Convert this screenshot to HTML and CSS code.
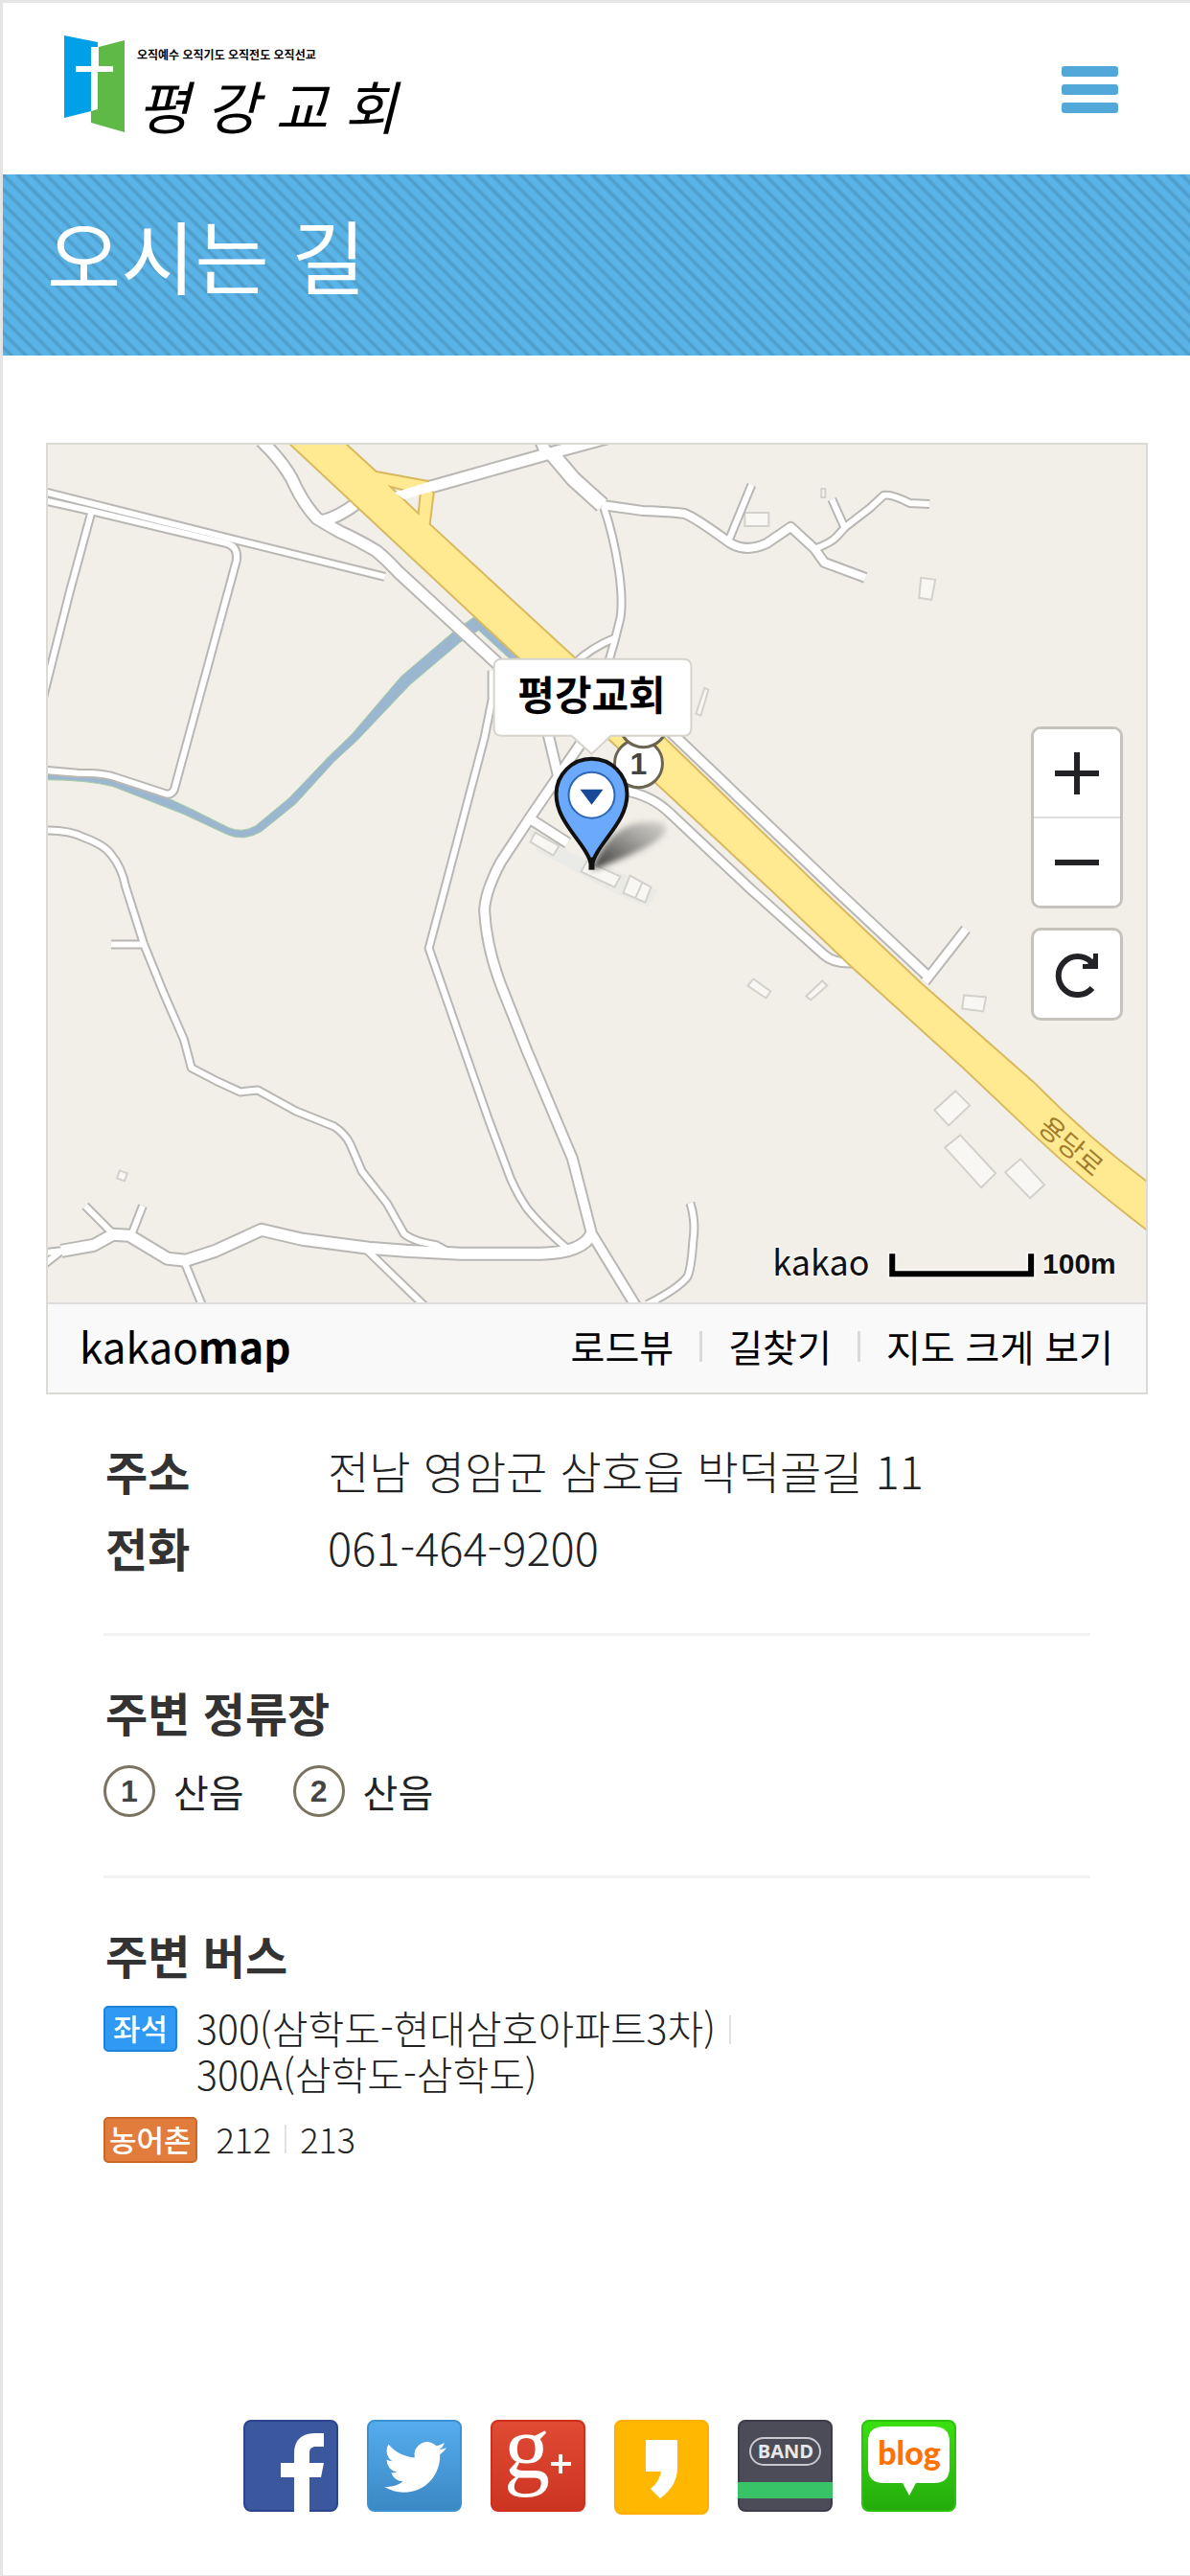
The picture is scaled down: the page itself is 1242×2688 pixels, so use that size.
FILE: index.html
```html
<!DOCTYPE html>
<html lang="ko">
<head>
    <meta charset="utf-8" />
    <meta name="viewport" content="width=device-width, initial-scale=1">
    <title>평강교회 - 오시는 길</title>
    <link rel="stylesheet" href="styles.css">
</head>
<body>
    <header class="header">
        <a class="logo" href="#">
            <svg class="logoMark" viewBox="0 0 64 101" aria-hidden="true">
                <path fill="#00a0e9" d="M0 0 35 7V12H28V32H12V38H28V79L0 86Z"/>
                <path fill="#5fb946" d="M36 12 63 5V101L28 91V79L35 77V38H51V32H36Z"/>
            </svg>
            <span class="logoText">
                <span class="slogan">오직예수 오직기도 오직전도 오직선교</span>
                <span class="churchName">평 강 교 회</span>
            </span>
        </a>
        <button class="menuButton" type="button" aria-label="메뉴">
            <span class="bar"></span>
            <span class="bar"></span>
            <span class="bar"></span>
        </button>
    </header>

    <div class="titleBar">
        <h1>오시는 길</h1>
    </div>

    <div class="mapBox">
        <div class="mapView">
            <svg class="mapSvg" viewBox="49 464 1147 896" role="img" aria-label="평강교회 지도">
                <defs>
                    <linearGradient id="shadow" x1="0" y1="1" x2="1" y2="0">
                        <stop offset="0" stop-color="#222" stop-opacity=".95"/>
                        <stop offset="1" stop-color="#777" stop-opacity=".25"/>
                    </linearGradient>
                    <filter id="soft"><feGaussianBlur stdDeviation="3"/></filter>
                    <!-- roads are drawn twice: grey casing, then white fill -->
                    <g id="roads">
                        <path class="w13" d="M417 514 449 508 570 474 640 455M564 460 570 474"/>
                        <path class="w15" d="M576 474 598 500 628 527"/>
                        <path class="w9" d="M630 530Q640 560 645 593 650 625 647 645L641 669 632 700M600 692Q615 677 641 666"/>
                        <path class="w10" d="M628 527 670 533Q700 534 714 536 725 540 762 567 779 577 800 567L825 550 850 573 860 587 903 603"/>
                        <path class="w9" d="M850 573Q868 566 873 560L882 550 908 530 922 517Q930 515 949 525L970 526M868 521 881 550M784 506 761 562"/>
                        <path class="w13" d="M272 460Q293 480 304 500 315 525 330 541 345 550 354 555 372 563 392 575 402 583 415 597L530 703M335 544Q352 540 372 525"/>
                        <path class="w9" d="M44 513 243 563 401 602"/>
                        <path class="w9" d="M44 522 97 534 235 567Q248 570 246 585L181 824Q178 831 170 828L118 811Q108 807 80 807L44 804M94 536 72 617 44 728"/>
                        <path class="w9" d="M44 867Q70 866 86 874 108 882 115 892 126 905 130 925L149 985 170 1037 191 1085 199 1115 224 1128 250 1140 268 1138 308 1160 348 1176Q360 1184 365 1195L377 1223 403 1256 421 1288Q430 1296 455 1300L466 1306M115 986H149"/>
                        <path class="w13" d="M63 1306 97 1300 117 1289 134 1290 174 1314 193 1316 224 1306 272 1284 315 1294 384 1303 423 1306 480 1309H564Q608 1308 617 1288"/>
                        <path class="w9" d="M44 1308 63 1306M44 1321 63 1306M88 1259 118 1289M148 1259 136 1290M191 1316 211 1365M381 1304 444 1365"/>
                        <path class="w9" d="M513 700V730L505 770 463 930 447 990 480 1085 509 1168 528 1219Q535 1240 549 1261 565 1281 592 1304"/>
                        <path class="w11" d="M605 777 553 853 522 900Q506 930 505 950 507 990 524 1033L549 1096 597 1210 617 1288 664 1365M570 760 582 810 588 815M553 855 592 880"/>
                        <path class="w9" d="M720 1256Q726 1275 723 1295 721 1325 717 1333 708 1345 675 1362"/>
                        <path class="w11" d="M690 755 872 929 967 1018"/>
                        <path class="w10" d="M650 825Q680 830 700 850L784 929 860 997Q870 1006 890 1005M1008 970 965 1025"/>
                    </g>
                </defs>
                <rect x="49" y="464" width="1147" height="896" fill="#f2efe8"/>
                <path fill="#eaebe7" d="M549 863 600 892 625 900 686 930 676 947 640 932 560 888Z"/>

                <path class="river" d="M44 808 80 807 118 812 170 831 200 845 238 864Q252 870 266 862L301 833 343 789 366 767 418 706 472 660 497 642 556 698 548 703 499 658 479 671 427 715 372 773 348 795 308 839 272 868Q253 879 236 871L191 850 117 821Q90 814 44 814Z"/>

                <g class="building">
                    <path d="M777 535H802V549H777ZM961 603 976 605 972 626 959 624ZM735 718 739 720 731 747 726 745ZM857 510H861V519H857Z"/>
                    <path d="M558 869 583 883 577 893 553 879ZM612 899 647 915 641 926 606 910ZM657 914 679 926 673 942 650 932ZM670 921 663 937"/>
                    <path d="M786 1022 804 1035 799 1042 780 1029ZM858 1024 863 1029 846 1044 841 1040ZM1006 1039 1029 1041 1026 1056 1004 1053Z"/>
                    <path d="M997 1139 1012 1154 990 1175 975 1159ZM1002 1185 1039 1225 1024 1240 986 1198ZM1065 1210 1090 1237 1075 1251 1049 1224ZM124 1222 132 1225 129 1233 121 1230Z"/>
                </g>

                <use class="casing" href="#roads"/>
                <use class="fill" href="#roads"/>

                <path class="mainRoad" d="M298 460 541 687 633 770 805 930 888 1009 1003 1113 1079 1185Q1133 1236 1202 1288V1237Q1140 1192 1079 1130L962 1027 859 930 693 770 600 687 448 547 452 515 446 502 392 492 357 460Z"/>
                <path fill="#f2efe8" stroke="#d9b95f" stroke-width="2" d="M407 508 438 516 436 536Z"/>
                <path fill="#fff" d="M411 514 443 504 460 500 460 510 421 521Z"/>
                <text class="roadName" transform="translate(1082 1179) rotate(41)">용당로</text>

                <g class="stop">
                    <circle cx="666" cy="797" r="25"/>
                    <text x="666" y="808">1</text>
                    <circle cx="671" cy="755" r="25"/>
                </g>

                <path class="bubble" d="M523 688H713Q721 688 721 696V760Q721 768 713 768H637L617 787 596 768H523Q515 768 515 760V696Q515 688 523 688Z"/>
                <text class="bubbleText" x="617" y="741">평강교회</text>

                <path fill="url(#shadow)" filter="url(#soft)" d="M617 908Q632 868 662 860 698 854 694 868 686 884 617 908Z"/>
                <path class="pin" d="M617 904C612 880 580 860 580 829A37 37 0 0 1 654 829C654 860 622 880 617 904Z"/>
                <path stroke="#111" stroke-width="6" d="M617 895V908"/>
                <circle cx="617" cy="830" r="24" fill="#fff" stroke="#2f66b5" stroke-width="2"/>
                <path fill="#174a99" d="M605 824H629L617 840Z"/>

                <text class="kakaoText" x="806" y="1332">kakao</text>
                <path fill="none" stroke="#f8f6f2" stroke-width="10" d="M931 1307V1330H1076V1307"/>
                <path fill="none" stroke="#000" stroke-width="6" d="M931 1309V1330H1076V1309"/>
                <text class="scaleText" x="1088" y="1330">100m</text>
            </svg>
            <div class="mapControls">
                <div class="zoomGroup">
                    <button type="button" aria-label="확대">
                        <svg viewBox="0 0 48 48"><path d="M24 2V46M1 24H47"/></svg>
                    </button>
                    <button type="button" aria-label="축소">
                        <svg viewBox="0 0 48 48"><path d="M1 24H47"/></svg>
                    </button>
                </div>
                <button class="resetButton" type="button" aria-label="새로고침">
                    <svg viewBox="0 0 48 48"><path d="M40 38A20 20 0 1 1 39 11"/><path class="solid" d="M46 2V18H30V13H35L41 7V2Z"/></svg>
                </button>
            </div>
        </div>
        <div class="mapFooter">
            <a class="mapLogo" href="#">kakao<b>map</b></a>
            <nav class="mapLinks">
                <a href="#">로드뷰</a>
                <a href="#">길찾기</a>
                <a href="#">지도 크게 보기</a>
            </nav>
        </div>
    </div>

    <div class="info">
        <dl class="section contact">
            <dt>주소</dt>
            <dd>전남 영암군 삼호읍 박덕골길 11</dd>
            <dt>전화</dt>
            <dd>061-464-9200</dd>
        </dl>
        <div class="section">
            <h2>주변 정류장</h2>
            <ul class="stops">
                <li><span class="num">1</span>산음</li>
                <li><span class="num">2</span>산음</li>
            </ul>
        </div>
        <div class="section">
            <h2>주변 버스</h2>
            <div class="busRow">
                <span class="badge seat">좌석</span>
                <ul class="routes">
                    <li>300(삼학도-현대삼호아파트3차)</li>
                    <li>300A(삼학도-삼학도)</li>
                </ul>
            </div>
            <div class="busRow">
                <span class="badge rural">농어촌</span>
                <ul class="routes inline">
                    <li>212</li>
                    <li>213</li>
                </ul>
            </div>
        </div>
    </div>

    <footer class="social">
        <a href="#" aria-label="Facebook">
            <svg viewBox="0 0 99 96">
                <rect x="1" y="1" width="97" height="94" rx="7" fill="#3b579d" stroke="#2a4693" stroke-width="2"/>
                <path fill="#fff" d="M84 14H75C60 14 53 22 53 35V45H39V60H53V96H69V60H81L84 45H69V35C69 30 71 28 76 28H84Z"/>
            </svg>
        </a>
        <a href="#" aria-label="Twitter">
            <svg viewBox="0 0 99 96">
                <defs><linearGradient id="tw" x2="0" y2="1"><stop stop-color="#55acee"/><stop offset="1" stop-color="#3b88c3"/></linearGradient></defs>
                <rect x="1" y="1" width="97" height="94" rx="7" fill="url(#tw)" stroke="#3a91d4" stroke-width="2"/>
                <path fill="#fff" transform="translate(18 17) scale(2.7)" d="M23.953 4.57a10 10 0 01-2.825.775 4.958 4.958 0 002.163-2.723c-.951.555-2.005.959-3.127 1.184a4.92 4.92 0 00-8.384 4.482C7.69 8.095 4.067 6.13 1.64 3.162a4.822 4.822 0 00-.666 2.475c0 1.71.87 3.213 2.188 4.096a4.904 4.904 0 01-2.228-.616v.06a4.923 4.923 0 003.946 4.827 4.996 4.996 0 01-2.212.085 4.936 4.936 0 004.604 3.417 9.867 9.867 0 01-6.102 2.105c-.39 0-.779-.023-1.17-.067a13.995 13.995 0 007.557 2.209c9.053 0 13.998-7.496 13.998-13.985 0-.21 0-.42-.015-.63A9.935 9.935 0 0024 4.59z"/>
            </svg>
        </a>
        <a href="#" aria-label="Google+">
            <svg viewBox="0 0 99 96">
                <defs><linearGradient id="gp" x2="0" y2="1"><stop stop-color="#e04b34"/><stop offset="1" stop-color="#cc3422"/></linearGradient></defs>
                <rect x="1" y="1" width="97" height="94" rx="7" fill="url(#gp)" stroke="#cf2f1b" stroke-width="2"/>
                <text class="gText" x="14" y="61">g</text>
                <path stroke="#fff" stroke-width="4" d="M73 36V56M63 46H84"/>
            </svg>
        </a>
        <a href="#" aria-label="KakaoStory">
            <svg viewBox="0 0 99 99">
                <rect x="1" y="1" width="97" height="97" rx="7" fill="#ffb700" stroke="#ffae00" stroke-width="2"/>
                <path fill="#fff" d="M33 21H65Q66 21 66 23V50Q66 69 48 82L38 72Q47 65 49 54H33Z"/>
            </svg>
        </a>
        <a href="#" aria-label="BAND">
            <svg viewBox="0 0 99 96">
                <rect x="1" y="1" width="97" height="94" rx="7" fill="#4c4c59" stroke="#3c3c4a" stroke-width="2"/>
                <rect y="65" width="99" height="17" fill="#38c466"/>
                <rect x="13" y="19" width="73" height="28" rx="14" fill="none" stroke="#c9c9cf" stroke-width="2"/>
                <text class="bandText" x="50" y="40">BAND</text>
            </svg>
        </a>
        <a href="#" aria-label="Naver blog">
            <svg viewBox="0 0 99 96">
                <defs><linearGradient id="bl" x2="0" y2="1"><stop stop-color="#3be010"/><stop offset="1" stop-color="#24ab0c"/></linearGradient></defs>
                <rect x="1" y="1" width="97" height="94" rx="7" fill="url(#bl)" stroke="#2cc40b" stroke-width="2"/>
                <path fill="#fff" d="M23 7H76Q92 7 92 23V50Q92 66 76 66H57L50 79 43 66H23Q7 66 7 50V23Q7 7 23 7Z"/>
                <text class="blogText" x="50" y="47">blog</text>
            </svg>
        </a>
    </footer>
</body>
</html>
```
FILE: styles.css
```css
*
{
    box-sizing:border-box;
}
body
{
    margin:0;
    min-height:100vh;
    display:flex;
    flex-direction:column;
    border:solid #e5e5e5;
    border-width:3px 0 1px 3px;
    background:#fff;
    color:#222;
    font-family:"Noto Sans CJK KR", "Noto Sans", sans-serif;
    font-size:40px;
    line-height:48px;
}
h1, h2, dl, dd, ul
{
    margin:0;
    padding:0;
}
ul
{
    list-style:none;
}
a
{
    color:inherit;
    text-decoration:none;
}
button
{
    padding:0;
    border:0;
    background:#fff;
}

/* header */
.header
{
    display:flex;
    justify-content:space-between;
    align-items:flex-start;
    height:179px;
    padding:34px 75px 0 64px;
}
.logo
{
    display:flex;
    gap:12px;
    color:#000;
}
.logoMark
{
    width:64px;
    height:101px;
}
.logoText
{
    display:flex;
    flex-direction:column;
    padding-top:8px;
}
.slogan
{
    font-size:12px;
    font-weight:bold;
    line-height:24px;
}
.churchName
{
    font-size:60px;
    font-style:italic;
    line-height:80px;
}
.menuButton
{
    display:flex;
    flex-direction:column;
    gap:8px;
    width:59px;
    padding-top:32px;
}
.bar
{
    width:100%;
    height:11px;
    border-radius:3px;
    background:#52a8d8;
}

/* page title */
.titleBar
{
    height:189px;
    padding:35px 46px;
    background:#5cb4e8 linear-gradient(45deg, #4f9cc8 2%, #5ab4e8 14%, #5ab4e8 36%, #4f9cc8 48%, #4f9cc8 52%, #5ab4e8 64%, #5ab4e8 86%, #4f9cc8 98%);
    background-size:15px 15px;
    color:#fff;
}
h1
{
    font-size:84px;
    font-weight:normal;
    line-height:96px;
}

/* map */
.mapBox
{
    margin:91px 44px 0 45px;
    border:2px solid #dcdad5;
}
.mapView
{
    position:relative;
}
.mapSvg
{
    display:block;
    width:100%;
}
#roads path
{
    fill:none;
    stroke-linejoin:round;
}
.casing
{
    stroke:#b8b7b4;
    --w9:10px;
    --w10:12px;
    --w11:13px;
    --w13:15px;
    --w15:18px;
}
.fill
{
    stroke:#fff;
    --w9:6px;
    --w10:8px;
    --w11:9px;
    --w13:11px;
    --w15:14px;
}
.w9 { stroke-width:var(--w9); }
.w10 { stroke-width:var(--w10); }
.w11 { stroke-width:var(--w11); }
.w13 { stroke-width:var(--w13); }
.w15 { stroke-width:var(--w15); }
.river
{
    fill:#9ab7cf;
    stroke:#a9cfa4;
    stroke-width:1px;
}
.building
{
    fill:#f8f7f3;
    stroke:#d3d1cb;
    stroke-width:2px;
}
.mainRoad
{
    fill:#ffe991;
    stroke:#d9b95f;
    stroke-width:2px;
}
.roadName
{
    font-size:28px;
    fill:#a07d2c;
}
.stop circle
{
    fill:#fff;
    stroke:#6b6450;
    stroke-width:3px;
}
.stop text
{
    font:bold 32px "Liberation Sans", sans-serif;
    fill:#444;
    text-anchor:middle;
}
.bubble
{
    fill:#fff;
    stroke:#d5d3cc;
    stroke-width:2px;
}
.bubbleText
{
    font-size:42px;
    font-weight:bold;
    text-anchor:middle;
    fill:#000;
}
.pin
{
    fill:#6aa9fb;
    stroke:#111;
    stroke-width:4px;
}
.kakaoText
{
    font-size:36px;
    fill:#111;
    stroke:#f8f6f2;
    stroke-width:3px;
    paint-order:stroke;
}
.scaleText
{
    font:bold 30px "Liberation Sans", sans-serif;
    fill:#111;
    stroke:#f8f6f2;
    stroke-width:3px;
    paint-order:stroke;
}
.mapControls
{
    position:absolute;
    top:294px;
    right:24px;
    width:96px;
}
.zoomGroup, .resetButton
{
    width:100%;
    border:3px solid #c6c3bc;
    border-radius:10px;
    background:#fff;
}
.zoomGroup
{
    overflow:hidden;
    margin-bottom:20px;
}
.mapControls button
{
    display:flex;
    justify-content:center;
    align-items:center;
    width:100%;
    height:91px;
}
.zoomGroup button + button
{
    height:93px;
    border-top:2px solid #dedede;
}
.mapControls .resetButton
{
    height:97px;
}
.mapControls svg
{
    width:48px;
    height:48px;
    fill:none;
    stroke:#222227;
    stroke-width:6px;
}
.mapControls .solid
{
    fill:#222227;
    stroke:none;
}
.mapFooter
{
    display:flex;
    justify-content:space-between;
    align-items:center;
    height:94px;
    padding:0 34px 6px 33px;
    border-top:2px solid #dedede;
    background:#f9f9f9;
    color:#000;
}
.mapLogo
{
    font-size:44px;
}
.mapLinks
{
    display:flex;
    align-items:center;
    font-size:39px;
}
.mapLinks a + a::before
{
    content:"";
    display:inline-block;
    width:3px;
    height:32px;
    margin:0 27px;
    background:#dadada;
}

/* address, stops, buses */
.info
{
    margin:0 104px 0 105px;
}
.section
{
    padding:51px 0 61px;
    border-bottom:3px solid #f2f2f2;
}
.section:last-child
{
    border-bottom:0;
}
.contact
{
    display:grid;
    grid-template-columns:234px 1fr;
    row-gap:24px;
    padding-bottom:62px;
    font-size:48px;
    line-height:56px;
}
.contact dt, h2
{
    padding-left:2px;
    font-weight:bold;
    color:#333;
}
.contact dd
{
    font-size:47px;
    font-weight:300;
}
h2
{
    font-size:48px;
    line-height:56px;
}
.stops
{
    display:flex;
    gap:51px;
    margin-top:28px;
}
.stops li
{
    display:flex;
    align-items:center;
    gap:19px;
}
.num
{
    width:54px;
    height:54px;
    border:3px solid #7a735f;
    border-radius:50%;
    font:bold 32px/48px "Liberation Sans", sans-serif;
    text-align:center;
    color:#444;
}
.busRow
{
    display:flex;
    align-items:flex-start;
    gap:20px;
    margin-top:24px;
}
.busRow + .busRow
{
    margin-top:20px;
}
.badge
{
    height:48px;
    margin-top:2px;
    padding:0 8px;
    border:2px solid;
    border-radius:5px;
    font-size:31px;
    font-weight:500;
    line-height:42px;
    color:#fff;
}
.seat
{
    border-color:#1d84dc;
    background:#2f99f3;
}
.rural
{
    padding:0 4px;
    border-color:#cb6828;
    background:#e27c3c;
}
.routes
{
    font-size:41px;
    font-weight:300;
}
.routes.inline
{
    display:flex;
    font-size:36px;
}
.routes li:not(:last-child)::after
{
    content:"";
    display:inline-block;
    width:2px;
    height:30px;
    margin:0 14px;
    background:#e2e2e2;
}

/* sns */
.social
{
    display:flex;
    justify-content:center;
    align-items:flex-start;
    gap:30px;
    margin-top:auto;
    padding:0 0 63px 7px;
}
.social svg
{
    display:block;
    width:99px;
    overflow:visible;
}
.gText
{
    font:96px "Liberation Serif", serif;
    fill:#fff;
}
.bandText
{
    font:bold 20px "Open Sans", sans-serif;
    fill:#e8e8ec;
    text-anchor:middle;
}
.blogText
{
    font:900 34px Lato, sans-serif;
    fill:#ff7200;
    text-anchor:middle;
}
```
